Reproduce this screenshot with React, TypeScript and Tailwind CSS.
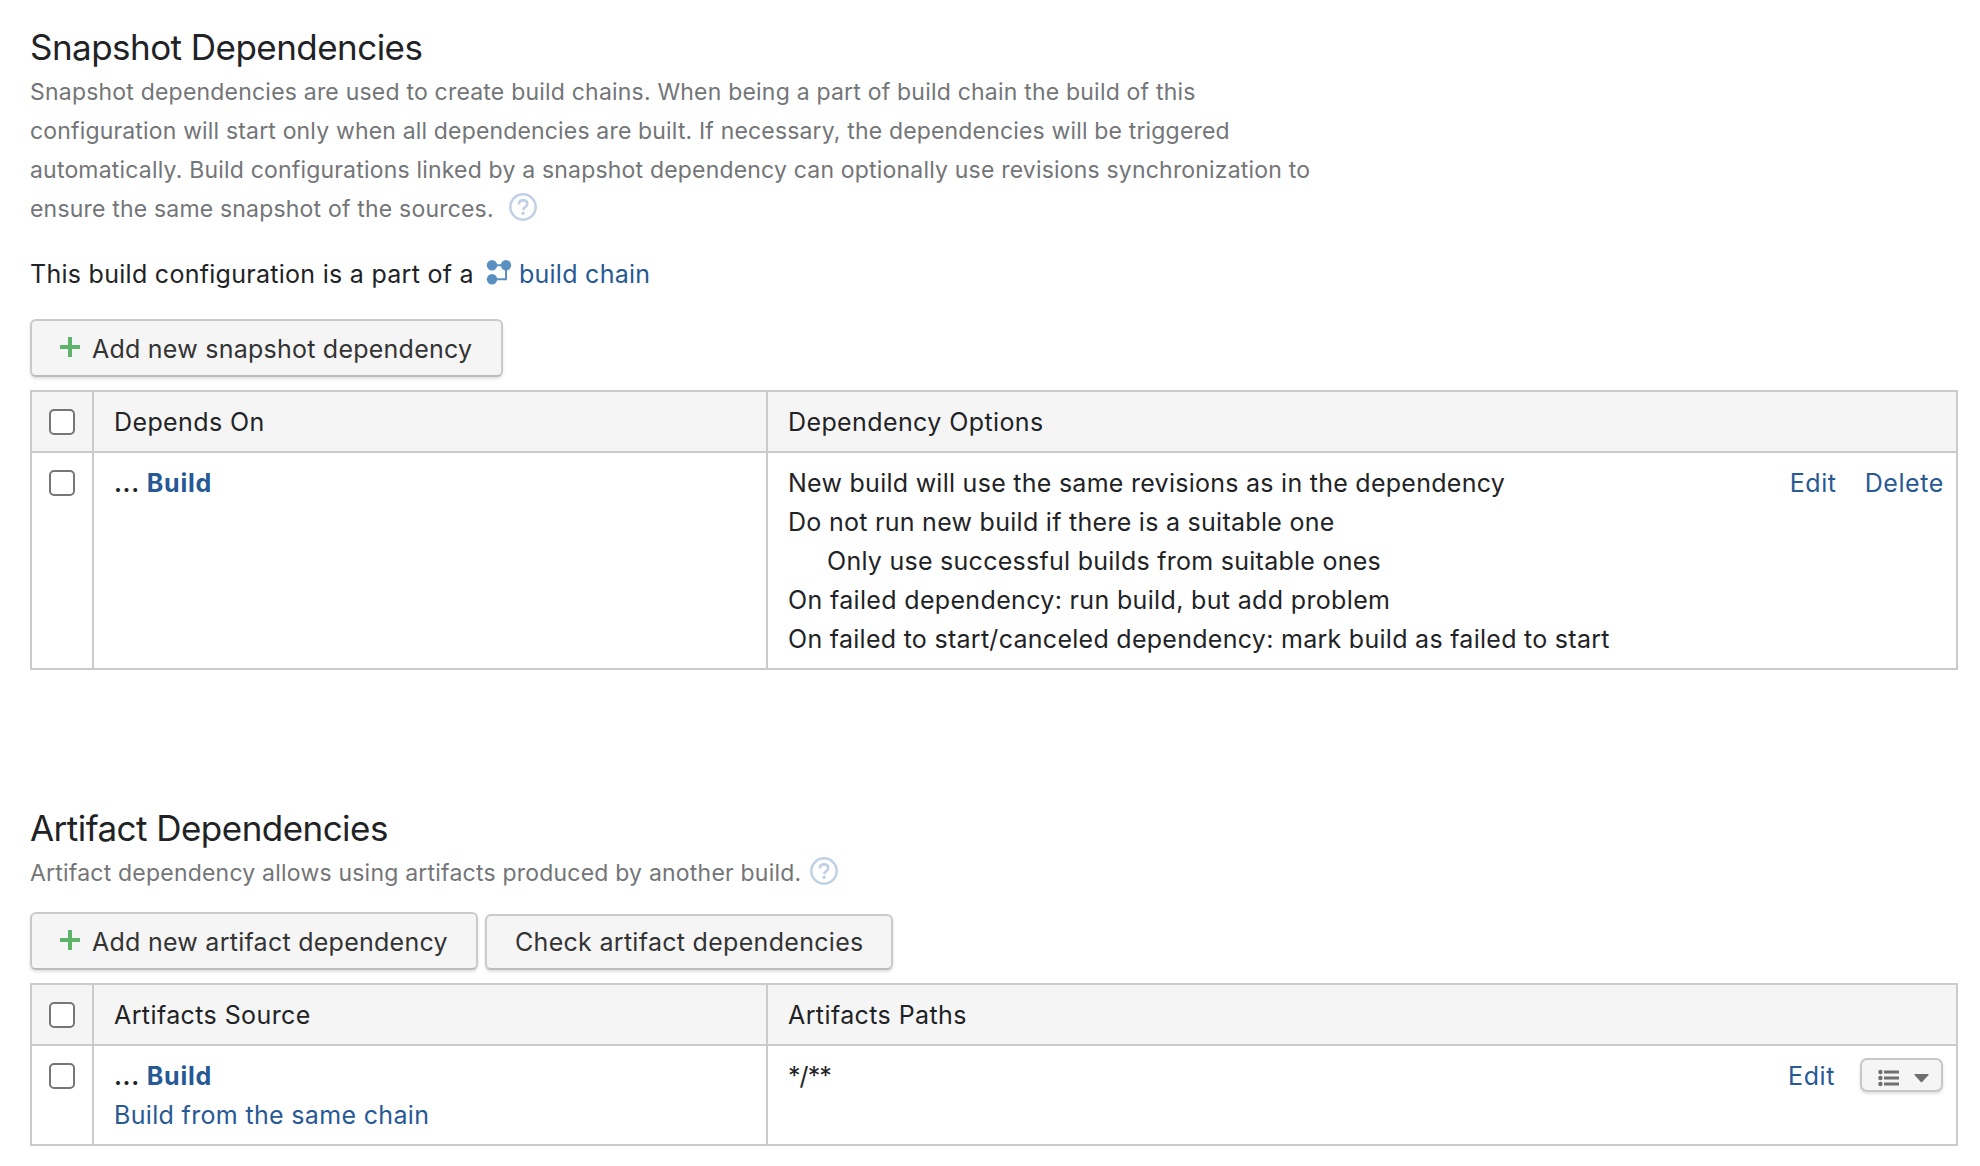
import React from 'react';

function HelpIcon({ className = '' }: { className?: string }) {
  return (
    <svg className={`h-7 w-7 shrink-0 ${className}`} viewBox="0 0 28 28" fill="none" stroke="#c1d0e5">
      <circle cx="14" cy="14" r="12.7" strokeWidth="2.5" />
      <path d="M9.9 11.4C9.9 8.9 11.6 7.4 14.1 7.4s4.2 1.4 4.2 3.5c0 3.1-4 3-4.1 6.2" strokeWidth="2.6" />
      <circle cx="14.1" cy="20.2" r="1.7" fill="#c1d0e5" stroke="none" />
    </svg>
  );
}

function ChainIcon() {
  return (
    <svg className="ml-[12px] -mt-1.5 h-[26px] w-[26px] shrink-0" viewBox="0 0 26 26" fill="#5a90c1">
      <path d="M6 6.3H20V20.3H6" fill="none" stroke="#5a90c1" strokeWidth="2" />
      <circle cx="6" cy="6.3" r="5.2" />
      <circle cx="20" cy="6.3" r="5.2" />
      <circle cx="6" cy="20.3" r="5.2" />
    </svg>
  );
}

function PlusIcon() {
  return (
    <svg className="mr-[12px] -mt-1 h-5 w-5 shrink-0" viewBox="0 0 20 20" stroke="#5fb46c" strokeWidth="4">
      <path d="M10 0V20M0 10H20" />
    </svg>
  );
}

function Checkbox() {
  return (
    <input
      type="checkbox"
      className="block h-[26px] w-[26px] appearance-none rounded-[5px] border-2 border-[#767676] bg-white"
    />
  );
}

function Button({ children, className }: { children: React.ReactNode; className: string }) {
  return (
    <button
      className={`flex items-center whitespace-nowrap rounded-md border-2 border-[#cacaca] border-b-[#bcbcbc] bg-[#f5f5f5] text-[#333] shadow-[0_2px_3px_rgba(0,0,0,0.12)] ${className}`}
    >
      {children}
    </button>
  );
}

function Link({ children, className = '' }: { children: React.ReactNode; className?: string }) {
  return (
    <a href="#" className={`text-[#275994] ${className}`}>
      {children}
    </a>
  );
}

function BuildName() {
  return (
    <p>
      <span className="font-semibold tracking-[0.6px]">...</span>
      <Link className="ml-[7px] font-bold tracking-[0.8px]">Build</Link>
    </p>
  );
}

function Table({ left, right, children }: { left: string; right: string; children: React.ReactNode }) {
  return (
    <div className="grid w-[1928px] grid-cols-[60px_672px_1188px] gap-x-[2px] whitespace-nowrap border-2 border-[#cbcbcb] bg-[#cbcbcb]">
      <div className="flex h-[59px] items-start bg-[#f5f5f5] pl-[17px] pt-[17px]">
        <Checkbox />
      </div>
      <div className="flex h-[59px] items-center bg-[#f5f5f5] pl-[20px] pt-[2px] tracking-[0.4px]">{left}</div>
      <div className="flex h-[59px] items-center bg-[#f5f5f5] pl-[20px] pt-[2px] tracking-[0.4px]">{right}</div>
      {children}
    </div>
  );
}

export default function App() {
  return (
    <main className="min-h-[1166px] w-[1980px] bg-white pl-[30px] pt-[23px] font-[Inter,sans-serif] text-[25px] leading-[39px] tracking-[0.28px] text-[#1f2326]">
      <section>
        <h2 className="text-[35px] leading-[48px] tracking-[-0.54px]">Snapshot Dependencies</h2>
        <div className="mt-[2px] whitespace-nowrap text-[23px] tracking-[0.19px] text-[#737577]">
          <p className="tracking-[0.205px]">
            Snapshot dependencies are used to create build chains. When being a part of build chain the build of this
          </p>
          <p className="tracking-[0.165px]">
            configuration will start only when all dependencies are built. If necessary, the dependencies will be triggered
          </p>
          <p>
            automatically. Build configurations linked by a snapshot dependency can optionally use revisions synchronization to
          </p>
          <p className="flex h-[39px] items-center">
            ensure the same snapshot of the sources.
            <HelpIcon className="ml-[15px] -mt-[5px]" />
          </p>
        </div>
        <p className="mt-[26px] flex h-[39px] items-center whitespace-nowrap">
          This build configuration is a part of a
          <ChainIcon />
          <Link className="ml-[7px]">build chain</Link>
        </p>
        <Button className="mt-[25px] h-[58px] w-[473px] pl-7 pt-[2px] tracking-[0.24px]">
          <PlusIcon />
          Add new snapshot dependency
        </Button>
        <div className="mt-[13px]">
          <Table left="Depends On" right="Dependency Options">
            <div className="mt-[2px] bg-white pl-[17px] pt-[17px]">
              <Checkbox />
            </div>
            <div className="mt-[2px] bg-white pl-[20px] pt-[11px]">
              <BuildName />
            </div>
            <div className="mt-[2px] flex h-[215px] justify-between bg-white pl-[20px] pr-[12px] pt-[11px]">
              <div>
                <p className="tracking-[0.265px]">New build will use the same revisions as in the dependency</p>
                <p>Do not run new build if there is a suitable one</p>
                <p className="pl-[39px] tracking-[0.265px]">Only use successful builds from suitable ones</p>
                <p className="tracking-[0.34px]">On failed dependency: run build, but add problem</p>
                <p>On failed to start/canceled dependency: mark build as failed to start</p>
              </div>
              <div className="flex gap-[28px] tracking-[0.6px]">
                <Link>Edit</Link>
                <Link>Delete</Link>
              </div>
            </div>
          </Table>
        </div>
      </section>

      <section className="mt-[134px]">
        <h2 className="text-[35px] leading-[48px] tracking-[-0.54px]">Artifact Dependencies</h2>
        <p className="mt-[2px] flex h-[39px] items-center whitespace-nowrap text-[23px] tracking-[0.21px] text-[#737577]">
          Artifact dependency allows using artifacts produced by another build.
          <HelpIcon className="ml-[9px] -mt-[5px]" />
        </p>
        <div className="mt-[19px] flex items-end gap-[7px]">
          <Button className="h-[58px] w-[448px] pl-7 pt-[2px] tracking-[0.26px]">
            <PlusIcon />
            Add new artifact dependency
          </Button>
          <Button className="h-[56px] w-[408px] pl-7 tracking-[0.3px]">Check artifact dependencies</Button>
        </div>
        <div className="mt-[13px]">
          <Table left="Artifacts Source" right="Artifacts Paths">
            <div className="mt-[2px] bg-white pl-[17px] pt-[17px]">
              <Checkbox />
            </div>
            <div className="mt-[2px] bg-white pl-[20px] pt-[11px]">
              <BuildName />
              <p>
                <Link className="tracking-[0.33px]">Build from the same chain</Link>
              </p>
            </div>
            <div className="mt-[2px] flex h-[98px] justify-between bg-white pl-[20px] pr-[13px] pt-[11px]">
              <p className="tracking-[-0.9px]">*/**</p>
              <div className="flex items-start">
                <Link className="tracking-[0.6px]">Edit</Link>
                <button className="ml-[25px] mt-px flex h-[34px] w-[83px] items-center rounded-[7px] border-2 border-[#c8c8c8] bg-[#f5f5f5] pl-4 shadow-[0_2px_3px_rgba(0,0,0,0.12)]">
                  <svg className="mt-1.5 h-[18px] w-[22px]" viewBox="0 0 22 18" fill="#6f6f6f">
                    <circle cx="2.4" cy="3" r="2.2" />
                    <circle cx="2.4" cy="9" r="2.2" />
                    <circle cx="2.4" cy="15" r="2.2" />
                    <path d="M6 1.5H21V4.5H6zM6 7.5H21V10.5H6zM6 13.5H21V16.5H6z" />
                  </svg>
                  <svg className="ml-[14px] mt-1.5 h-[9px] w-[15px]" viewBox="0 0 15 9" fill="#6f6f6f">
                    <path d="M.8 0H14.2Q15 .3 14.5 1L8.2 8Q7.5 8.7 6.8 8L.5 1Q0 .3 .8 0Z" />
                  </svg>
                </button>
              </div>
            </div>
          </Table>
        </div>
      </section>
    </main>
  );
}
